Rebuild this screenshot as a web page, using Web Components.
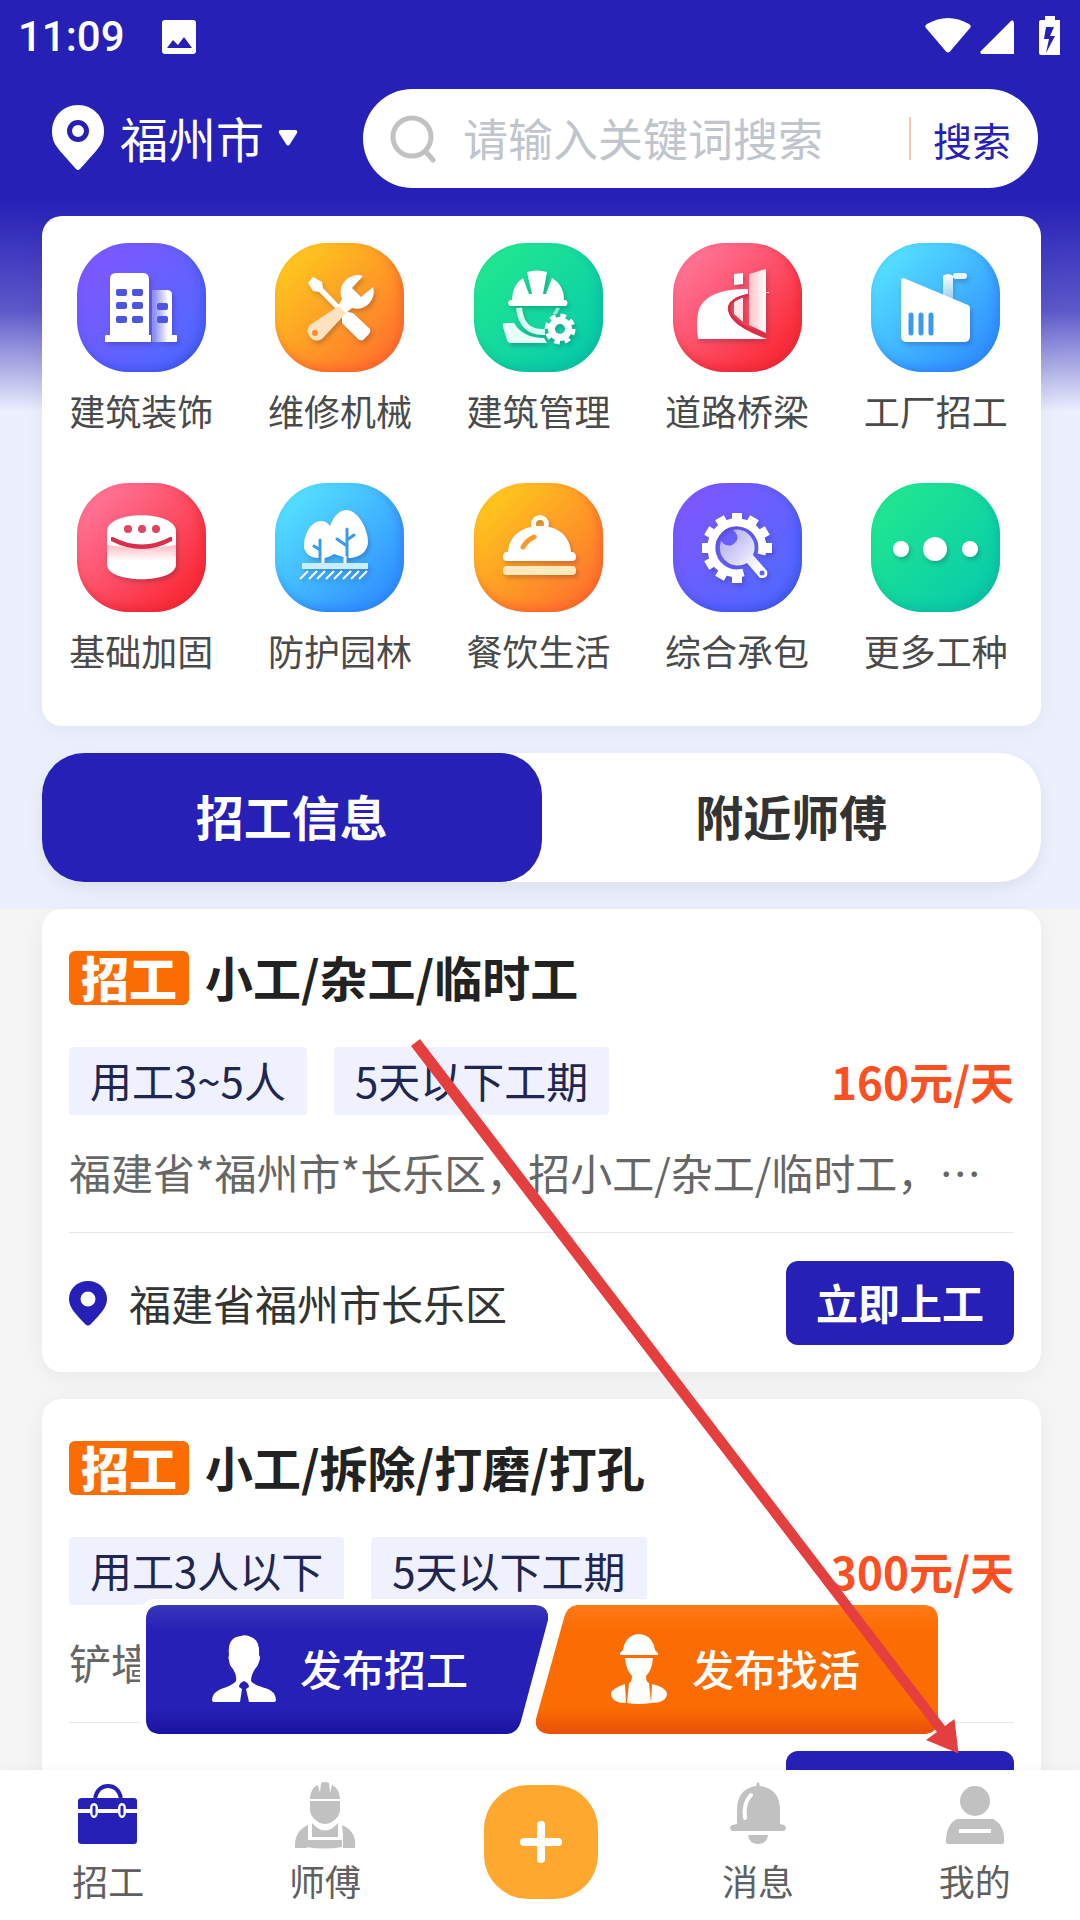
<!DOCTYPE html>
<html lang="zh-CN">
<head>
<meta charset="utf-8">
<meta name="viewport" content="width=device-width, initial-scale=1">
<title>招工信息</title>
<style>
  :root {
    --brand: #2620b6;
    --orange: #fb6c02;
    --page: #f5f5f5;
    --tint: #ecf0fd;
    --shadow: 0 4px 24px rgba(0, 0, 0, .05);
  }
  body {
    margin: 0;
    font-family: "Noto Sans CJK SC", "Noto Sans", sans-serif;
    font-size: 42px;
    line-height: 60px;
    color: #333;
  }
</style>
</head>
<body>
<app-shell>
  <status-bar slot="top" time="11:09"></status-bar>
  <search-header slot="top" city="福州市"></search-header>

  <category-grid>
    <category-item icon="building" tone="purple">建筑装饰</category-item>
    <category-item icon="tools" tone="orange">维修机械</category-item>
    <category-item icon="manager" tone="green">建筑管理</category-item>
    <category-item icon="bridge" tone="red">道路桥梁</category-item>
    <category-item icon="factory" tone="blue">工厂招工</category-item>
    <category-item icon="base" tone="red">基础加固</category-item>
    <category-item icon="trees" tone="blue">防护园林</category-item>
    <category-item icon="dish" tone="orange">餐饮生活</category-item>
    <category-item icon="gear" tone="purple">综合承包</category-item>
    <category-item icon="more" tone="green">更多工种</category-item>
  </category-grid>
  <segment-tabs first="招工信息" second="附近师傅"></segment-tabs>

  <job-list slot="list">
    <job-card>
      <span slot="title">小工/杂工/临时工</span>
      <job-chip slot="chips">用工3~5人</job-chip>
      <job-chip slot="chips">5天以下工期</job-chip>
      <span slot="price">160元/天</span>
      <span slot="desc">福建省*福州市*长乐区，招小工/杂工/临时工，…</span>
      <span slot="place">福建省福州市长乐区</span>
    </job-card>
    <job-card>
      <span slot="title">小工/拆除/打磨/打孔</span>
      <job-chip slot="chips">用工3人以下</job-chip>
      <job-chip slot="chips">5天以下工期</job-chip>
      <span slot="price">300元/天</span>
      <span slot="desc">铲墙</span>
    </job-card>
  </job-list>

  <publish-bar slot="float"></publish-bar>
  <tab-bar slot="bottom"></tab-bar>
  <pointer-arrow slot="float"></pointer-arrow>
</app-shell>

<script>
const define = (name, html, setup) => {
  const template = document.createElement('template');
  template.innerHTML = '<style>*{box-sizing:border-box}button,input{font:inherit;color:inherit;border:0;padding:0;margin:0;background:none}a{color:inherit;text-decoration:none}svg{display:block}</style>' + html;
  customElements.define(name, class extends HTMLElement {
    constructor() {
      super();
      this.attachShadow({ mode: 'open' }).append(template.content.cloneNode(true));
    }
    connectedCallback() {
      if (setup) setup(this, this.shadowRoot);
    }
  });
};

define('app-shell', `
  <style>
    :host { display: flex; flex-direction: column; height: 100vh; position: relative; overflow: hidden;
      background: linear-gradient(var(--brand) 0, var(--brand) 200px, #5c58c9 310px, var(--tint) 412px); }
    main { flex: 1; min-height: 0; overflow: hidden; display: flex; flex-direction: column; }
    .intro { flex: none; display: flex; flex-direction: column; gap: 27px; padding: 0 39px 27px 42px; }
    slot[name=list] { display: block; }
  </style>
  <slot name="top"></slot>
  <main><div class="intro"><slot></slot></div><slot name="list"></slot></main>
  <slot name="bottom"></slot>
  <slot name="float"></slot>`);

define('status-bar', `
  <style>
    :host { display: flex; align-items: center; box-sizing: border-box; height: 72px; padding: 2px 20px 0 18px; color: #fff; flex: none;
      font: 500 42px/48px Roboto, sans-serif; }
    .photo { margin-left: 36px; }
    .right { margin-left: auto; }
  </style>
  <span id="time"></span>
  <svg class="photo" width="36" height="36" viewBox="0 0 36 36"><path fill="#fff" fill-rule="evenodd" d="M4 1h28q3 0 3 3v28q0 3-3 3H4q-3 0-3-3V4q0-3 3-3zM6 29h25l-8-11-6 8-5-5z"/></svg>
  <svg class="right" width="136" height="42" viewBox="0 0 136 42" fill="#fff">
    <path d="M2 12q-2-2 1-4Q24-4 45 8q3 2 1 4L26 35.500q-2 2-4 0z"/>
    <path d="M90 7v31H58q-3-1-1-3L87 5q2-2 3 2z"/>
    <path fill-rule="evenodd" d="M121 0h10v4h4q2 0 2 2v31q0 2-2 2h-18q-2 0-2-2V6q0-2 2-2h4zM122 11l-2 12h5l-3 14 9-17h-5l4-9z"/>
  </svg>`, (el, root) => { root.getElementById('time').textContent = el.getAttribute('time'); });

define('search-header', `
  <style>
    :host { display: flex; align-items: center; justify-content: space-between; flex: none;
      padding: 17px 42px 28px 50px; }
    .city { display: flex; align-items: center; color: #fff; font-size: 48px; line-height: 60px; padding-bottom: 2px; }
    .city span { padding-bottom: 2px; }
    .city svg:first-child { margin-right: 14px; }
    .city svg:last-child { margin-left: 14px; }
    form { display: flex; align-items: center; width: 675px; height: 99px; border-radius: 50px; background: #fff; padding: 0 27px 0 26px; margin: 0; }
    input { flex: 1; min-width: 0; margin-left: 26px; font-size: 45px; line-height: 60px; height: 60px; padding-bottom: 2px; outline: 0; color: #333; }
    input::placeholder { color: #c0c4cc; opacity: 1; }
    form button { border-left: 2px solid #fbc7b2; height: 43px; line-height: 42px; padding-left: 22px; font-size: 39px; color: var(--brand); }
  </style>
  <button class="city" type="button">
    <svg width="56" height="68" viewBox="0 0 56 68"><path fill="#fff" d="M28 1C13 1 2 13 2 27c0 9 3 14 8 20l16 18q2 2 4 0l16-18c5-6 8-11 8-20C54 13 43 1 28 1z"/><circle cx="28" cy="27" r="8.500" fill="#fff" stroke="#2620b6" stroke-width="5"/></svg>
    <span id="city"></span>
    <svg width="20" height="18" viewBox="0 0 20 18"><path fill="#fff" d="M3 1h14q3 0 2 3l-7 11q-2 3-4 0L1 4Q0 1 3 1z"/></svg>
  </button>
  <form>
    <svg width="48" height="48" viewBox="0 0 48 48" fill="none" stroke="#c1c1c1" stroke-width="5" stroke-linecap="round"><circle cx="23" cy="22" r="19"/><path d="M37 37l7 8"/></svg>
    <input type="search" aria-label="搜索关键词" placeholder="请输入关键词搜索">
    <button type="button">搜索</button>
  </form>`, (el, root) => { root.getElementById('city').textContent = el.getAttribute('city'); });

define('category-grid', `
  <style>
    :host { display: grid; grid-template-columns: repeat(5, 1fr); row-gap: 46px; padding: 27px 6px 49px 0;
      background: #fff; border-radius: 20px; box-shadow: var(--shadow); }
  </style><slot></slot>`);

const gearTeeth = [0, 90, 120, 150, 180, 210, 240, 270, 300, 330]
  .map(a => `<path transform="rotate(${a} 64 65)" d="M91 60h8v10h-8z"/>`).join('');

const glyphs = {
  building: `<defs><linearGradient id="g"><stop offset=".1" stop-color="#fff" stop-opacity=".3"/><stop offset=".8" stop-color="#fff"/></linearGradient></defs>
    <path fill="url(#g)" d="M75 47h15q5 0 5 5v47H75z"/><path fill="#fff" d="M95 92h4q1 0 1 1v5q0 1-1 1H88l7-7zM39 30h27q6 0 6 6v56h2v7H28v-6l1-1h4V36q0-6 6-6z"/>
    <g fill="#4b55e0"><rect x="39" y="46" width="11" height="7" rx="2"/><rect x="55" y="46" width="11" height="7" rx="2"/><rect x="39" y="59" width="11" height="7" rx="2"/><rect x="55" y="59" width="11" height="7" rx="2"/><rect x="39" y="73" width="11" height="7" rx="2"/><rect x="55" y="73" width="11" height="7" rx="2"/><rect x="80" y="60" width="11" height="7" rx="2"/><rect x="80" y="73" width="11" height="7" rx="2"/></g>`,
  tools: `<path fill="#fff" d="M33 40l5-6 9 5 1 6 20 21 2 4 3-1 5 1 17 16q1 3-1 5l-6 6q-3 1-5-1L67 80v-6l1-2-4-3-20-20-6-1z"/>
    <path fill="#ffe3c0" d="M65 62l7 7-25 27q-7 4-12-2t0-12z"/><circle cx="40" cy="90" r="3" fill="#f98b2a"/>
    <path fill="#fff" d="M88 33A17 17 0 0 0 67 56l-4 7 8 7 6-5a17 17 0 0 0 21-21L86 54l-9-9z"/>`,
  manager: `<path fill="#fff" d="M53 29q10-3 20 0l-4 22h-11zM49 35l6 16h17l6-16q12 7 12 22h2q3 3 0 6H36q-4-3 0-6h2q0-15 11-22z"/>
    <path fill="none" stroke="#d9fff0" stroke-width="6" d="M45 65c2 16 9 25 26 24"/><path fill="#8ff0d0" d="M82 65h4l-3 6h-4z"/>
    <path fill="#e7fff6" d="M31 80h9q9 15 30 15l3 5H36q-2 0-3-3l-4-13q-1-4 2-4z"/>
    <circle cx="86" cy="86" r="8.500" fill="none" stroke="#fff" stroke-width="7"/><circle cx="86" cy="86" r="13" fill="none" stroke="#fff" stroke-width="5" stroke-dasharray="5.500 4.710"/>`,
  bridge: `<defs><linearGradient id="g" x2="1" y2="0"><stop stop-color="#ffc2c8"/><stop offset="1" stop-color="#fff"/></linearGradient></defs>
    <path fill="#fff" d="M61 31l9-1v11l-9 1zM25 96q-3-20 2-32C34 51 51 46 75 46v5q-20 5-20 15c2 14 18 22 39 30z"/>
    <path fill="#ffe6e8" d="M61 59l9-5v25l-9-8z"/><path fill="url(#g)" d="M76 31l17-5v64l-17-8z"/><path fill="#ffd1d5" d="M93 49h3v1h-3z"/>
    <path fill="none" stroke="#d92c45" stroke-width="2.500" d="M75 52q-19 4-19 14c2 13 18 20 37 27"/>`,
  factory: `<defs><linearGradient id="g" x2="0" y2="1"><stop stop-color="#fff"/><stop offset="1" stop-color="#fff" stop-opacity=".4"/></linearGradient></defs>
    <path fill="url(#g)" d="M72 33q5-4 10 0v27l-10-5z"/><rect x="82" y="30" width="14" height="6" rx="3" fill="#e8f7ff"/>
    <path fill="#fff" d="M30 39q0-6 5-3l62 26q2 1 2 3v28q0 6-6 6H36q-6 0-6-6z"/>
    <path stroke="#3a9af0" stroke-width="5" stroke-linecap="round" d="M40 72v18M50 72v18M60 72v18"/>`,
  base: `<defs><linearGradient id="g" x2="0" y2="1"><stop stop-color="#ffb4bd"/><stop offset=".5" stop-color="#fff"/></linearGradient></defs>
    <path fill="url(#g)" d="M30 60v22c1 19 68 19 69 0V60z"/><path fill="#fff" d="M30 48c1-21 68-21 69 0v14q-34 5-69 0z"/>
    <g fill="#e04460"><circle cx="51" cy="46" r="4"/><circle cx="65" cy="46" r="4"/><circle cx="79" cy="46" r="4"/></g>
    <path fill="#d8304c" d="M34 54h2q29 15 57 0h2v4q-30 16-61 0z"/>`,
  trees: `<path fill="#fff" d="M45 38q7 0 10 5Q61 27 72 27c12 1 21 20 21 31 0 13-12 18-22 17l-12-4q-7 5-15 4C34 75 28 69 29 60c2-13 8-21 16-22z"/>
    <g fill="none" stroke="#3b9bea" stroke-width="3" stroke-linecap="round"><path d="M45 57v18M45 67l-6-4M72 46v29M72 63l-10-7M72 57l7-5"/></g>
    <path stroke="#fff" stroke-width="3" d="M48 74v7M70 73v8"/>
    <path fill="#c9efff" d="M27 80h66v6H27z"/>
    <path stroke="#fff" stroke-width="2" d="M25 96l8-8M34 96l8-8M42 96l8-8M51 96l8-8M59 96l8-8M68 96l8-8M76 96l8-8M84 96l8-8"/>`,
  dish: `<circle cx="66" cy="41" r="6.500" fill="none" stroke="#fff" stroke-width="5"/><path fill="#fff" d="M34 69c1-16 14-26 32-26s30 10 31 26h2q3 1 3 5 0 4-4 4H33q-4 0-4-4 0-5 4-5z"/>
    <path fill="none" stroke="#ff9628" stroke-width="5" stroke-linecap="round" d="M49 64q4-7 11-10"/><rect x="29" y="83" width="73" height="9" rx="4" fill="#ffe9bd"/>`,
  gear: `<defs><linearGradient id="g" x2="1" y2="1"><stop offset=".15" stop-color="#fff" stop-opacity=".55"/><stop offset=".8" stop-color="#fff"/></linearGradient></defs>
    <path fill="none" stroke="#fff" stroke-width="8" d="M70.500 89.500A25.500 25.500 0 1 1 88.500 71.500"/><g fill="#fff">${gearTeeth}</g>
    <path fill="url(#g)" d="M60 47a18 18 0 0 1 20 25l14 16q2 8-7 7L74 80A18 18 0 0 1 48 58q5 6 11 4 7-4 5-10-1-3-4-5z"/><circle cx="89" cy="90" r="2.500" fill="#5565f5"/>`,
  more: `<g fill="#fff"><circle cx="30" cy="66" r="8"/><circle cx="64" cy="66" r="12"/><circle cx="99" cy="66" r="8"/></g>`
};
const tones = {
  purple: ['#7b58ff', '#5567ff', '#3c50ea'],
  orange: ['#fdc41e', '#ff7d2b', '#f8602a'],
  green: ['#1fe591', '#0bcfa8', '#08b89c'],
  red: ['#ff7193', '#fb303e', '#ea2434'],
  blue: ['#52dcff', '#3498ff', '#2a80f8']
};

define('category-item', `
  <style>
    :host { display: block; }
    a { display: flex; flex-direction: column; align-items: center; gap: 11px; font-size: 36px; line-height: 54px; color: #4a4a4a; }
    .tile { width: 129px; height: 129px; border-radius: 52px; background: linear-gradient(135deg, var(--a) 15%, var(--b) 80%);
      box-shadow: inset -4px -5px 12px -2px var(--c); }
    svg { filter: drop-shadow(2px 3px 2px rgba(30, 20, 60, .22)); }
  </style>
  <a href="#"><span class="tile"></span><slot></slot></a>`, (el, root) => {
    const tile = root.querySelector('.tile');
    tones[el.getAttribute('tone')].forEach((c, i) => tile.style.setProperty('--' + 'abc'[i], c));
    tile.innerHTML = '<svg width="129" height="129" viewBox="0 0 129 129" aria-hidden="true">' + glyphs[el.getAttribute('icon')] + '</svg>';
  });

define('segment-tabs', `
  <style>
    :host { display: flex; border-radius: 42px; background: #fff; box-shadow: 0 6px 18px rgba(0, 0, 0, .07); }
    button { flex: 1; height: 129px; border-radius: 42px; padding-bottom: 5px; font-size: 48px; font-weight: 700; line-height: 72px; }
    .on { background: var(--brand); color: #fff; }
  </style>
  <button class="on" type="button"></button><button type="button"></button>`, (el, root) => {
    const [a, b] = root.querySelectorAll('button');
    a.textContent = el.getAttribute('first');
    b.textContent = el.getAttribute('second');
  });

define('job-list', `
  <style>:host { display: flex; flex-direction: column; gap: 27px; padding: 0 39px 0 42px; background: var(--page); }</style><slot></slot>`);

define('job-chip', `
  <style>:host { display: block; height: 68px; line-height: 66px; padding: 0 21px; border-radius: 4px; background: #eff1fe; color: #20264f; }</style><slot></slot>`);

define('job-card', `
  <style>
    :host { display: block; background: #fff; border-radius: 20px; padding: 42px 27px 27px; box-shadow: var(--shadow); }
    header { display: flex; align-items: center; gap: 16px; height: 54px; }
    .tag { width: 120px; height: 54px; border-radius: 6px; background: var(--orange); color: #fff; text-align: center; font-size: 48px; font-weight: 900; line-height: 50px; }
    h2 { margin: 0; padding-bottom: 5px; font-size: 48px; line-height: 54px; font-weight: 700; color: #222; }
    .facts { display: flex; align-items: center; gap: 27px; margin-top: 42px; }
    .price { margin-left: auto; font-size: 44px; font-weight: 700; color: #fc5022; }
    p { margin: 28px 0 29px; height: 60px; line-height: 58px; color: #666; white-space: nowrap; overflow: hidden; }
    footer { display: flex; align-items: center; border-top: 1px solid #e6e6e6; padding-top: 28px; }
    footer svg { margin-right: 22px; }
    footer button { margin-left: auto; width: 228px; height: 84px; border-radius: 12px; background: var(--brand); color: #fff; font-weight: 700; line-height: 80px; padding-bottom: 2px; }
  </style>
  <header><span class="tag">招工</span><h2><slot name="title"></slot></h2></header>
  <div class="facts"><slot name="chips"></slot><strong class="price"><slot name="price"></slot></strong></div>
  <p><slot name="desc"></slot></p>
  <footer>
    <svg width="38" height="46" viewBox="0 0 38 46"><path fill="#2620b6" fill-rule="evenodd" d="M19 1C8 1 0 9 0 19c0 9 7 15 16 25q3 3 6 0c9-10 16-16 16-25C38 9 30 1 19 1zm0 10.500a7.500 7.500 0 1 1 0 15 7.500 7.500 0 0 1 0-15z"/></svg>
    <slot name="place"></slot>
    <button type="button">立即上工</button>
  </footer>`);

define('publish-bar', `
  <style>
    :host { position: absolute; left: 4px; right: 0; bottom: 180px; display: flex; justify-content: center; color: #fff; pointer-events: none; }
    .box { display: flex; padding: 6px; background: #fff; border-radius: 14px; }
    button { display: grid; grid-template: 129px / 402px; pointer-events: auto; }
    button + button { margin-left: -12px; }
    button > * { grid-area: 1 / 1; }
    .label { display: flex; align-items: center; gap: 22px; padding: 0 0 4px 64px; z-index: 1; font-weight: 500; line-height: 60px; }
    button + button .label { padding-left: 74px; gap: 24px; }
  </style>
  <div class="box">
    <button type="button">
      <svg width="402" height="129" viewBox="0 0 402 129"><defs><linearGradient id="b" x2="0" y2="1"><stop stop-color="#3a36b8"/><stop offset=".2" stop-color="#2620b6"/><stop offset=".8" stop-color="#2620b6"/><stop offset="1" stop-color="#1a12a0"/></linearGradient></defs>
        <path fill="url(#b)" d="M13 0H389q15 1 13 15L375 116q-3 12-14 13H13Q1 128 0 116V13Q1 1 13 0z"/></svg>
      <span class="label"><svg width="68" height="68" viewBox="0 0 68 68" fill="#fff"><path d="M31 2q5-2 10 1 9 3 8 18 2 2 0 7-1 4-4 7-4 6-4 12 2 3 8 5c12 4 16 5 17 14q0 2-3 2H5q-3 0-3-2c1-9 7-10 17-14q6-3 7-5 1-6-3-12-4-4-4-9-1-2 0-5Q17 3 31 2z"/><path fill="#2620b6" d="M34 47q5 2 5 6l-3 2 3 13h-9l2-13-3-2q0-4 5-6z"/></svg>发布招工</span>
    </button>
    <button type="button">
      <svg width="402" height="129" viewBox="0 0 402 129"><defs><linearGradient id="o" x2="0" y2="1"><stop stop-color="#ff7a18"/><stop offset=".2" stop-color="#fb6c02"/><stop offset=".8" stop-color="#fb6c02"/><stop offset="1" stop-color="#e85008"/></linearGradient></defs>
        <path fill="url(#o)" d="M41 0H389q12 1 13 13V116q-1 12-13 13H13Q-2 128 0 114L28 13Q31 1 41 0z"/></svg>
      <span class="label"><svg width="58" height="72" viewBox="0 0 58 72" fill="#fff"><path d="M10 21q4-3 4-8Q19 2 29 2t15 11q0 5 4 8v2H10zM15 26h28q-1 12-7 18 0 6 3 7l2 20q-12 2-24 0l2-20q3-1 3-7-6-6-7-18zM15 52l1 19Q1 71 1 61q2-5 14-9zM42 52q14 3 15 10-1 9-16 9z"/></svg>发布找活</span>
    </button>
  </div>`);

define('tab-bar', `
  <style>
    :host { display: block; flex: none; background: #fff; z-index: 1; box-shadow: 0 -2px 8px rgba(0, 0, 0, .03); }
    nav { display: grid; grid-template-columns: repeat(5, 1fr); height: 150px; margin-right: -3px; }
    a { display: flex; flex-direction: column; align-items: center; gap: 1px; padding-top: 10px; font-size: 36px; line-height: 54px; color: #606060; }
    .add { display: block; justify-self: center; width: 114px; height: 114px; margin-top: 15px; border-radius: 44px; background: #fea82f; }
  </style>
  <nav>
    <a href="#"><svg width="60" height="72" viewBox="0 0 60 72"><path fill="none" stroke="#2620b6" stroke-width="4" d="M17 18Q20 6 30 6t13 12"/><path fill="#2620b6" d="M4 18h52q3 0 3 3v8H48q0-6-4-6t-4 6H20q0-6-4-6t-4 6H0v-8q0-3 4-3zM0 33h12q1 5 4 5t4-5h20q1 5 4 5t4-5h11v28q0 3-3 3H4q-4 0-4-3z"/><path stroke="#2620b6" stroke-width="3" stroke-linecap="round" d="M16 27v7M44 27v7"/></svg>招工</a>
    <a href="#"><svg width="62" height="72" viewBox="0 0 62 72" fill="#c1c1c1"><path d="M16 18Q17 7 24 5l2 8 1-10q4-2 8 0l1 10 2-8q7 3 8 13v1H16zM16 21h30v10q-1 6-8 11-7 4-14 0-7-5-8-11zM14 45v14l-1 9H1q-1-17 13-23zM18 43q13 15 26 0v14H18zM48 45q15 6 13 23H49V54zM14 60h34v7q-17 3-36 0z"/></svg>师傅</a>
    <button class="add" type="button" aria-label="发布"><svg width="114" height="114" viewBox="0 0 114 114"><path stroke="#fff" stroke-width="8" stroke-linecap="round" d="M40 57h34M57 40v34"/></svg></button>
    <a href="#"><svg width="60" height="72" viewBox="0 0 60 72"><path fill="#c1c1c1" d="M28 6q2-8 4 0 20 3 20 24v14l4 1q4 3 0 6H4q-4-3 0-6l5-1V30Q9 9 28 6zM20 55h20q-1 9-10 9t-10-9z"/><path fill="none" stroke="#fff" stroke-width="4" stroke-linecap="round" d="M23 15q-8 8-6 23"/></svg>消息</a>
    <a href="#"><svg width="60" height="72" viewBox="0 0 60 72" fill="#c1c1c1"><circle cx="30" cy="21" r="15"/><path fill-rule="evenodd" d="M12 39h36q12 6 11 23 0 2-2 2H3q-2 0-2-2 0-18 11-23zm2 10v4h32v-4z"/></svg>我的</a>
  </nav>`);

define('pointer-arrow', `
  <style>:host { position: absolute; left: 410px; top: 1038px; z-index: 2; pointer-events: none; }</style>
  <svg width="552" height="718" viewBox="0 0 552 718" fill="#e53e3e"><path d="M10 1L1 8l529 690 8-6zM548.500 715.500L544.500 681 516 702z"/></svg>`);
</script>
</body>
</html>
